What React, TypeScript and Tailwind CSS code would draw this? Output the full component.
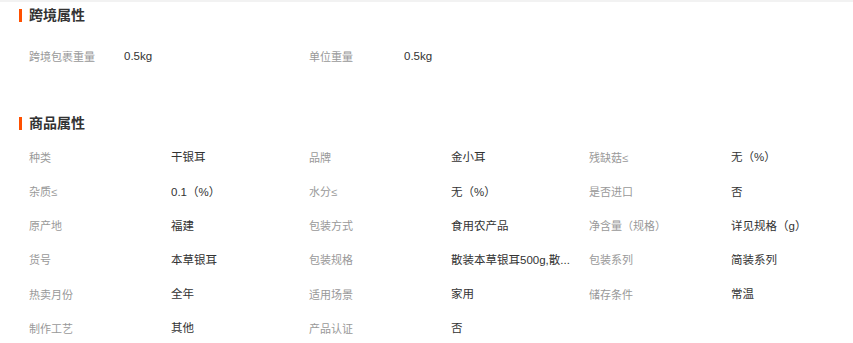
import React from "react";

const cross = [
  ["跨境包裹重量", "0.5kg"],
  ["单位重量", "0.5kg"],
];

const attrs: [string, string][] = [
  ["种类", "干银耳"],
  ["品牌", "金小耳"],
  ["残缺菇≤", "无（%）"],
  ["杂质≤", "0.1（%）"],
  ["水分≤", "无（%）"],
  ["是否进口", "否"],
  ["原产地", "福建"],
  ["包装方式", "食用农产品"],
  ["净含量（规格）", "详见规格（g）"],
  ["货号", "本草银耳"],
  ["包装规格", "散装本草银耳500g,散..."],
  ["包装系列", "简装系列"],
  ["热卖月份", "全年"],
  ["适用场景", "家用"],
  ["储存条件", "常温"],
  ["制作工艺", "其他"],
  ["产品认证", "否"],
];

function Title({ text }: { text: string }) {
  return (
    <div className="flex h-[26px] items-center pl-[19px]">
      <span className="mr-[7px] h-[13px] w-[3px] bg-[#ff5000]" />
      <span className="text-[14px] font-bold leading-none text-[#333333]">{text}</span>
    </div>
  );
}

export default function App() {
  return (
    <div className="h-[343px] w-[853px] overflow-hidden bg-white font-['Liberation_Sans','Noto_Sans_CJK_SC',sans-serif]">
      <div className="h-[2px] w-full bg-[#f2f2f2]" />
      <Title text="跨境属性" />
      <div className="mt-[12px] grid grid-cols-[280px_280px_280px] pl-[29px]">
        {cross.map(([k, v]) => (
          <div key={k} className="flex h-[34px] items-center">
            <span className="w-[95px] shrink-0 text-[11px] text-[#999999]">{k}</span>
            <span className="text-[11.5px] text-[#333333]">{v}</span>
          </div>
        ))}
      </div>
      <div className="mt-[36px]">
        <Title text="商品属性" />
      </div>
      <div className="mt-[5px] grid grid-cols-[280px_280px_280px] pl-[29px]">
        {attrs.map(([k, v]) => (
          <div key={k} className="flex h-[34.2px] items-center">
            <span className="w-[142px] shrink-0 whitespace-nowrap text-[11px] text-[#999999]">{k}</span>
            <span className="whitespace-nowrap text-[11.5px] text-[#333333]">{v}</span>
          </div>
        ))}
      </div>
    </div>
  );
}
